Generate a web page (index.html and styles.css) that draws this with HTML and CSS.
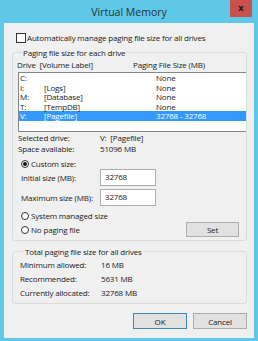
FILE: index.html
```html
<!DOCTYPE html>
<html>
<head>
  <link rel="stylesheet" href="styles.css">
</head>
<body>
  <div class="window">
    <div class="titlebar">
      <span></span>
      <span class="title">Virtual Memory</span>
      <span class="close">x</span>
    </div>
    <div class="client">
      <label class="check-row"><span class="checkbox"></span>Automatically manage paging file size for all drives</label>

      <fieldset class="group group-drives">
        <legend>Paging file size for each drive</legend>
        <div class="list-head"><span class="col-drive">Drive&nbsp; [Volume Label]</span><span class="col-size">Paging File Size (MB)</span></div>
        <div class="listbox">
          <div class="list-row"><span class="c1">C:</span><span class="c2"></span><span class="c3">None</span></div>
          <div class="list-row"><span class="c1">I:</span><span class="c2">[Logs]</span><span class="c3">None</span></div>
          <div class="list-row"><span class="c1">M:</span><span class="c2">[Database]</span><span class="c3">None</span></div>
          <div class="list-row"><span class="c1">T:</span><span class="c2">[TempDB]</span><span class="c3">None</span></div>
          <div class="list-row selected"><span class="c1">V:</span><span class="c2">[Pagefile]</span><span class="c3">32768 - 32768</span></div>
        </div>
        <div class="info first"><span class="info-label">Selected drive:</span><span>V:&nbsp; [Pagefile]</span></div>
        <div class="info"><span class="info-label">Space available:</span><span>51096 MB</span></div>
        <div class="radio-row custom"><span class="radio on"></span>Custom size:</div>
        <div class="field-row"><span class="field-label">Initial size (MB):</span><span class="textbox">32768</span></div>
        <div class="field-row second"><span class="field-label">Maximum size (MB):</span><span class="textbox">32768</span></div>
        <div class="radio-row system"><span class="radio"></span>System managed size</div>
        <div class="last-row">
          <div class="radio-row"><span class="radio"></span>No paging file</div>
          <button class="btn set">Set</button>
        </div>
      </fieldset>

      <fieldset class="group group-total">
        <legend>Total paging file size for all drives</legend>
        <div class="total-row"><span class="total-label">Minimum allowed:</span><span>16 MB</span></div>
        <div class="total-row"><span class="total-label">Recommended:</span><span>5631 MB</span></div>
        <div class="total-row"><span class="total-label">Currently allocated:</span><span>32768 MB</span></div>
      </fieldset>

      <div class="buttons">
        <button class="btn default">OK</button>
        <button class="btn">Cancel</button>
      </div>
    </div>
  </div>
</body>
</html>
```

FILE: styles.css
```css
* { box-sizing: border-box; }
body { margin: 0; background: #5fc8e7; font-family: "Open Sans", "Noto Sans", sans-serif; font-size: 8px; letter-spacing: -0.17px; color: #1a1a1a; }
.window { width: 258px; height: 341px; padding: 0 4px 3px; display: flex; flex-direction: column; }
.titlebar { height: 23px; display: grid; grid-template-columns: 1fr auto 1fr; align-items: start; }
.title { font-size: 10.5px; letter-spacing: 0; color: #26323d; line-height: 24px; }
.close { justify-self: end; margin-right: 2px; width: 22px; height: 17px; background: #c8514c; color: #1c1c1c; font-family: "DejaVu Sans", sans-serif; font-weight: bold; font-size: 9px; letter-spacing: 0; line-height: 16px; text-align: center; }
.client { flex: 1; background: #f0f0f0; padding: 10px 7px 0 8px; display: flex; flex-direction: column; }

.check-row { display: flex; align-items: center; height: 10px; margin-left: 4px; line-height: 10px; }
.checkbox { width: 10px; height: 10px; border: 1px solid #333; background: #fff; margin-right: 1px; }

.group { margin: 5px 0 0; padding: 0; border: 1px solid #dcdcdc; border-radius: 3px; min-width: 0; }
.group legend { padding: 0 1px; margin-left: 4px; line-height: 9px; }
.group-drives { padding: 3px 0 3px 5px; }
.list-head { display: flex; line-height: 10px; height: 10px; margin-left: -1px; }
.col-drive { width: 116px; }
.listbox { margin-top: 2px; height: 60px; border: 1px solid #828790; border-right: none; background: #fff; }
.list-row { display: flex; height: 9.6px; line-height: 9.6px; padding-left: 1px; }
.list-row .c1 { width: 24px; }
.list-row .c2 { width: 112px; }
.list-row.selected { background: #3399ff; color: #fff; }

.info { display: flex; line-height: 10.5px; height: 10.5px; }
.info.first { margin-top: 1px; }
.info-label { width: 82px; }

.radio-row { display: flex; align-items: center; height: 10px; line-height: 10px; padding-left: 3px; }
.radio { width: 8px; height: 8px; border: 1px solid #333; border-radius: 50%; background: #fff; margin-right: 2px; display: flex; align-items: center; justify-content: center; }
.radio.on::after { content: ""; width: 4px; height: 4px; border-radius: 50%; background: #111; }
.radio-row.custom { margin-top: 5px; }
.radio-row.system { margin-top: 5px; }

.field-row { display: flex; align-items: center; height: 17px; padding-left: 3px; }
.field-row.second { margin-top: 3px; }
.field-label { width: 79px; }
.textbox { width: 56px; height: 17px; border: 1px solid #abadb3; background: #fff; padding: 2px 0 0 4px; line-height: 10px; }

.last-row { display: flex; align-items: center; justify-content: space-between; margin-top: 1px; height: 15px; padding-right: 7px; }
.btn { font: inherit; letter-spacing: inherit; color: #1a1a1a; background: #e1e1e1; border: 1px solid #adadad; padding: 0; border-radius: 0; }
.btn.set { width: 53px; height: 15px; }

.group-total { margin-top: 6px; padding: 2px 0 3px 7px; }
.total-row { display: flex; height: 14px; line-height: 14px; }
.total-label { width: 81px; }

.buttons { display: flex; justify-content: flex-end; gap: 6px; margin-top: 9px; }
.buttons .btn { width: 54px; height: 16px; }
.btn.default { border-color: #3c86c8; }
```
